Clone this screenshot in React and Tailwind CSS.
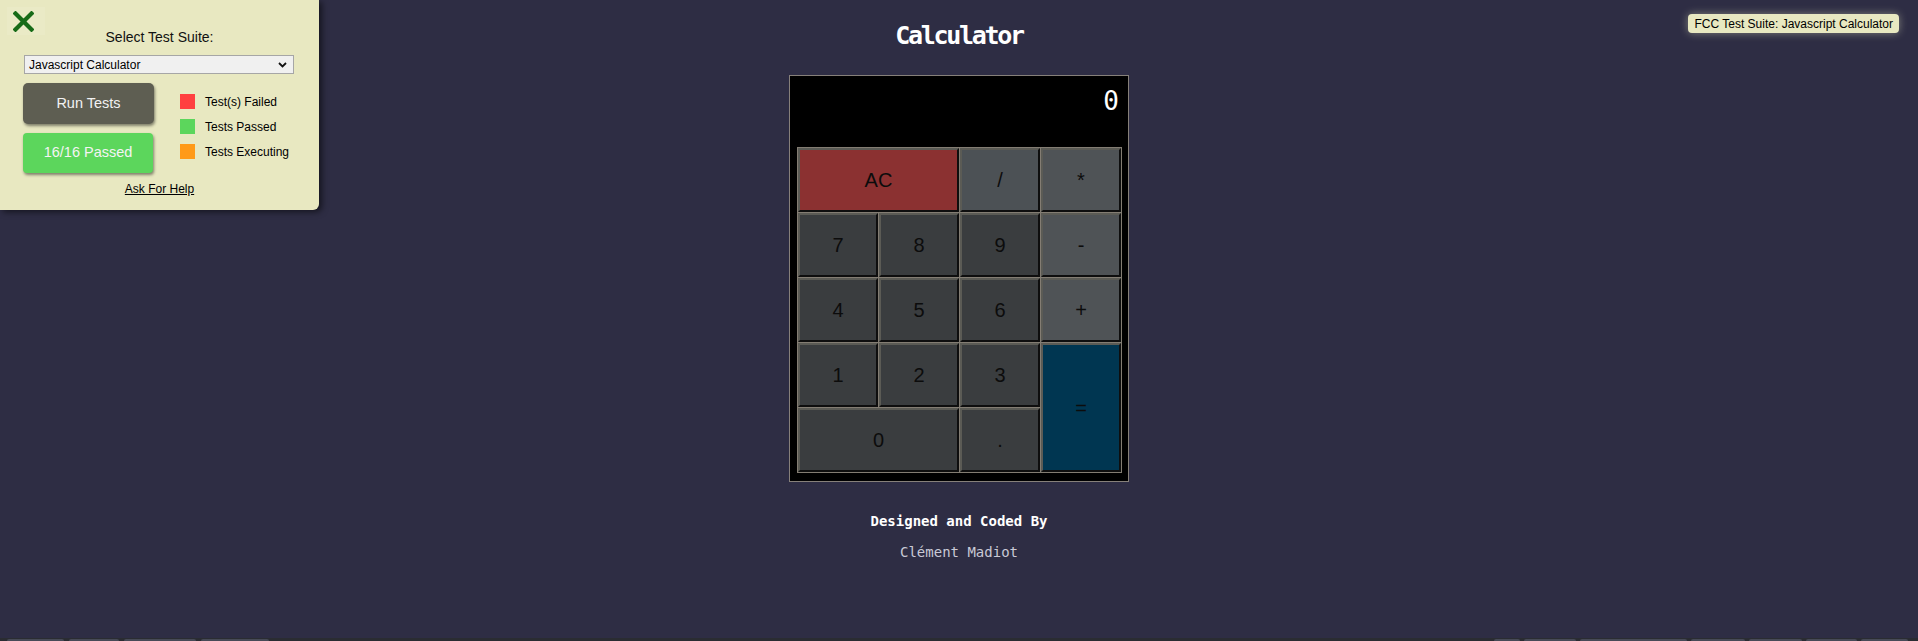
import React from "react";

const mono = { fontFamily: '"DejaVu Sans Mono", "Liberation Mono", monospace' };
const sans = { fontFamily: '"Liberation Sans", Arial, sans-serif' };

function Key({ label, className = "", style }) {
  return (
    <div
      className={
        "flex items-center justify-center text-[20px] text-[#0c0c0c] border-2 border-t-[#5b5b55] border-l-[#5b5b55] border-b-[#0e0e0e] border-r-[#0e0e0e] " +
        className
      }
      style={{ ...sans, ...style }}
    >
      {label}
    </div>
  );
}

function Legend({ color, label }) {
  return (
    <div className="flex items-center h-[15px]">
      <div className={"w-[15px] h-[15px] " + color} />
      <span className="ml-[10px] text-[12px] text-black">{label}</span>
    </div>
  );
}

export default function App() {
  return (
    <div className="relative w-[1918px] h-[641px] bg-[#2e2d44] flex flex-col overflow-hidden">
      {/* main content */}
      <div className="flex-1 flex flex-col items-center pt-[21px]">
        <h1
          className="text-[25px] leading-[30px] font-bold text-white tracking-[-2.3px]"
          style={mono}
        >
          Calculator
        </h1>
        <div className="mt-[24px] border border-[#86807a] bg-black pl-[7px] pr-[6px] pb-[8px]">
          <div
            className="h-[71px] pt-[10px] pr-[3px] flex justify-end text-[26px] leading-[30px] text-white"
            style={mono}
          >
            0
          </div>
          <div className="grid grid-cols-[repeat(4,80px)] grid-rows-[repeat(5,64px)] gap-px p-px bg-[#837d73]">
            <Key label="AC" className="col-span-2 bg-[#8b3131]" />
            <Key label="/" className="bg-[#4c5155]" />
            <Key label="*" className="bg-[#4f5356]" />
            <Key label="7" className="bg-[#3a3d3f]" />
            <Key label="8" className="bg-[#3a3d3f]" />
            <Key label="9" className="bg-[#3a3d3f]" />
            <Key label="-" className="bg-[#4f5356]" />
            <Key label="4" className="bg-[#3a3d3f]" />
            <Key label="5" className="bg-[#3a3d3f]" />
            <Key label="6" className="bg-[#3a3d3f]" />
            <Key label="+" className="bg-[#4f5356]" />
            <Key label="1" className="bg-[#3a3d3f]" />
            <Key label="2" className="bg-[#3a3d3f]" />
            <Key label="3" className="bg-[#3a3d3f]" />
            <Key
              label="="
              className="row-span-2 bg-[#003651] border-t-[#1d3442] border-l-[#1d3442]"
            />
            <Key label="0" className="col-span-2 bg-[#3a3d3f]" />
            <Key label="." className="bg-[#3a3d3f]" />
          </div>
        </div>
        <div
          className="mt-[29px] text-[14px] leading-[20px] font-bold text-white"
          style={mono}
        >
          Designed and Coded By
        </div>
        <div
          className="mt-[11px] text-[14px] leading-[20px] text-[#c9c9d6]"
          style={mono}
        >
          Clément Madiot
        </div>
      </div>

      {/* bottom strip */}
      <div className="h-[3px] bg-[#2a2c32] flex items-end justify-between px-[7px]">
        <div className="flex gap-[5px] h-[2px]">
          <div className="w-[57px] bg-[#474a57] rounded-t-[2px]" />
          <div className="w-[50px] bg-[#474a57] rounded-t-[2px]" />
          <div className="w-[72px] bg-[#474a57] rounded-t-[2px]" />
          <div className="w-[68px] bg-[#474a57] rounded-t-[2px]" />
        </div>
        <div className="flex gap-[4px] h-[2px] mr-[3px]">
          <div className="w-[26px] bg-[#474a57] rounded-t-[2px]" />
          <div className="w-[52px] bg-[#474a57] rounded-t-[2px]" />
          <div className="w-[107px] bg-[#474a57] rounded-t-[2px]" />
          <div className="w-[54px] bg-[#474a57] rounded-t-[2px]" />
          <div className="w-[53px] bg-[#474a57] rounded-t-[2px]" />
          <div className="w-[51px] bg-[#474a57] rounded-t-[2px]" />
          <div className="w-[47px] bg-[#474a57] rounded-t-[2px]" />
        </div>
      </div>

      {/* test suite panel */}
      <div
        className="absolute left-0 top-0 w-[319px] h-[210px] bg-[#e8e8c1] rounded-br-[6px] shadow-[3px_2px_6px_rgba(0,0,0,0.55)] px-[23px] pt-[28px] flex flex-col"
        style={sans}
      >
        <div className="absolute left-[7px] top-[7px] w-[38px] h-[28px] bg-[#eaeac6] flex items-center justify-center">
          <svg width="21" height="21" viewBox="0 0 21 21" className="-ml-[6px] mt-[1px]">
            <path d="M2.5 2.5 L18.5 18.5 M18.5 2.5 L2.5 18.5" stroke="#176b17" strokeWidth="4.2" strokeLinecap="square" />
          </svg>
        </div>
        <div className="text-center text-[14px] leading-[19px] text-[#111]">Select Test Suite:</div>
        <div className="mt-[8px] ml-px mr-[2px] h-[19px] bg-[#f0f0f0] border border-[#a6a6a6] flex items-center justify-between pl-[4px] pr-[6px]">
          <span className="text-[12px] text-black">Javascript Calculator</span>
          <svg width="9" height="6" viewBox="0 0 9 6">
            <path d="M1 1 L4.5 4.5 L8 1" stroke="#111" strokeWidth="1.8" fill="none" />
          </svg>
        </div>
        <div className="mt-[9px] flex">
          <div className="flex flex-col gap-[9px]">
            <div className="w-[131px] h-[41px] rounded-[5px] bg-[#5e5e52] shadow-[1px_2px_3px_rgba(0,0,0,0.45)] flex items-center justify-center text-[14.5px] text-[#f2f2f2]">
              Run Tests
            </div>
            <div className="w-[130px] h-[40px] rounded-[4px] bg-[#5cd65c] shadow-[1px_2px_3px_rgba(0,0,0,0.45)] flex items-center justify-center text-[14.5px] text-[#f4f4f4]">
              16/16 Passed
            </div>
          </div>
          <div className="ml-[26px] mt-[11px] flex flex-col gap-[10px]">
            <Legend color="bg-[#ff4040]" label="Test(s) Failed" />
            <Legend color="bg-[#5cd65c]" label="Tests Passed" />
            <Legend color="bg-[#ff9a18]" label="Tests Executing" />
          </div>
        </div>
        <div className="mt-[9px] text-center text-[12px] leading-[14px] text-black underline">
          Ask For Help
        </div>
      </div>

      {/* top-right badge */}
      <div
        className="absolute right-[19px] top-[14px] h-[19px] px-[6px] flex items-center bg-[#e8e8c1] rounded-[4px] shadow-[0_0_8px_rgba(232,232,193,0.45)] text-[12px] text-black"
        style={sans}
      >
        FCC Test Suite: Javascript Calculator
      </div>
    </div>
  );
}
